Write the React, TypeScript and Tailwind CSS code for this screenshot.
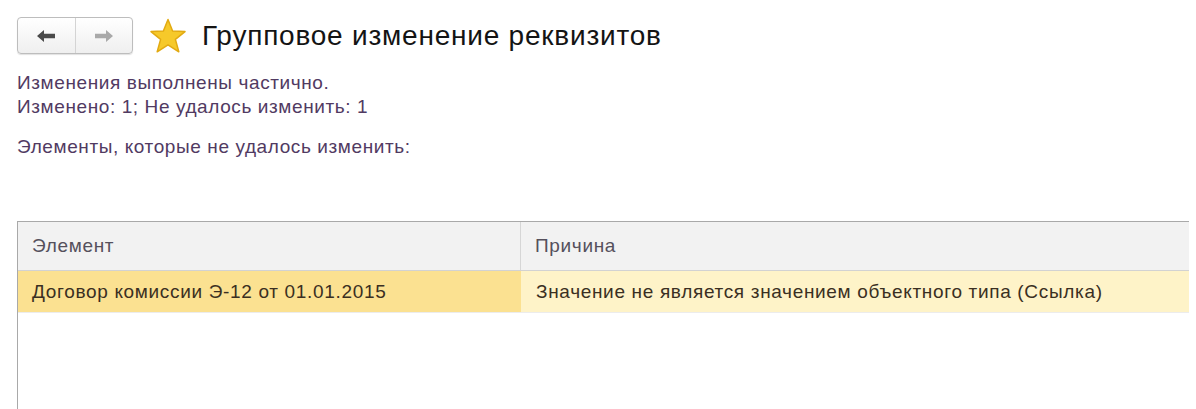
import React from 'react';

const font = { fontFamily: '"Liberation Sans", Arial, sans-serif' };

const ArrowLeft: React.FC<{ color: string }> = ({ color }) => (
  <svg width="20" height="14" viewBox="0 0 20 14">
    <path d="M1 7 L8 1 L8 4.8 L19 4.8 L19 9.2 L8 9.2 L8 13 Z" fill={color} />
  </svg>
);

const ArrowRight: React.FC<{ color: string }> = ({ color }) => (
  <svg width="20" height="14" viewBox="0 0 20 14">
    <path d="M19 7 L12 1 L12 4.8 L1 4.8 L1 9.2 L12 9.2 L12 13 Z" fill={color} />
  </svg>
);

const Star = () => (
  <svg width="38" height="36" viewBox="0 0 38 36">
    <path
      d="M19 1.5 L23.6 13 L36 13.6 L26.4 21.4 L29.8 33.8 L19 26.8 L8.2 33.8 L11.6 21.4 L2 13.6 L14.4 13 Z"
      fill="#f6c92a"
      stroke="#e2aa12"
      strokeWidth="1.5"
      strokeLinejoin="round"
    />
  </svg>
);

const App: React.FC = () => {
  return (
    <div className="w-[1196px] h-[409px] bg-white overflow-hidden pl-[17px] pt-[17px]" style={font}>
      <div className="flex items-center h-[37px]">
        <div className="flex h-[37px] w-[116px] rounded-[4px] border border-[#bdbdbd] bg-gradient-to-b from-white to-[#efefef] shadow-[0_1px_1px_rgba(0,0,0,0.12)]">
          <div className="flex-1 flex items-center justify-center border-r border-[#d4d4d4]">
            <ArrowLeft color="#4a4a4a" />
          </div>
          <div className="flex-1 flex items-center justify-center">
            <ArrowRight color="#a9a9a9" />
          </div>
        </div>
        <div className="ml-[16px] flex items-center">
          <Star />
        </div>
        <div className="ml-[15px] text-[28px] text-[#141414] leading-none tracking-[0.78px]">Групповое изменение реквизитов</div>
      </div>

      <div className="mt-[17px] text-[19px] leading-[24px] text-[#513a62] tracking-[0.6px]">
        <div>Изменения выполнены частично.</div>
        <div>Изменено: 1; Не удалось изменить: 1</div>
      </div>
      <div className="mt-[16px] text-[19px] leading-[24px] text-[#513a62] tracking-[0.6px]">Элементы, которые не удалось изменить:</div>

      <div className="mt-[62px] w-[1172px] h-[200px] border-t border-l border-[#a9a9a9]">
        <div className="flex h-[49px] bg-[#f2f2f2] border-b border-[#d2d2d2] text-[19px] text-[#55505c] tracking-[0.67px]">
          <div className="w-[503px] flex items-center pl-[14px] border-r border-[#d6d6d6]">Элемент</div>
          <div className="flex-1 flex items-center pl-[14px]">Причина</div>
        </div>
        <div className="flex h-[42px] border-b border-[#ececec] text-[19px] text-[#3a2f22] tracking-[0.67px]">
          <div className="w-[503px] flex items-center pl-[14px] pt-[2px] bg-[#fbe191]">Договор комиссии Э-12 от 01.01.2015</div>
          <div className="flex-1 flex items-center pl-[15px] pt-[2px] bg-[#fef3c8]">Значение не является значением объектного типа (Ссылка)</div>
        </div>
      </div>
    </div>
  );
};

export default App;
